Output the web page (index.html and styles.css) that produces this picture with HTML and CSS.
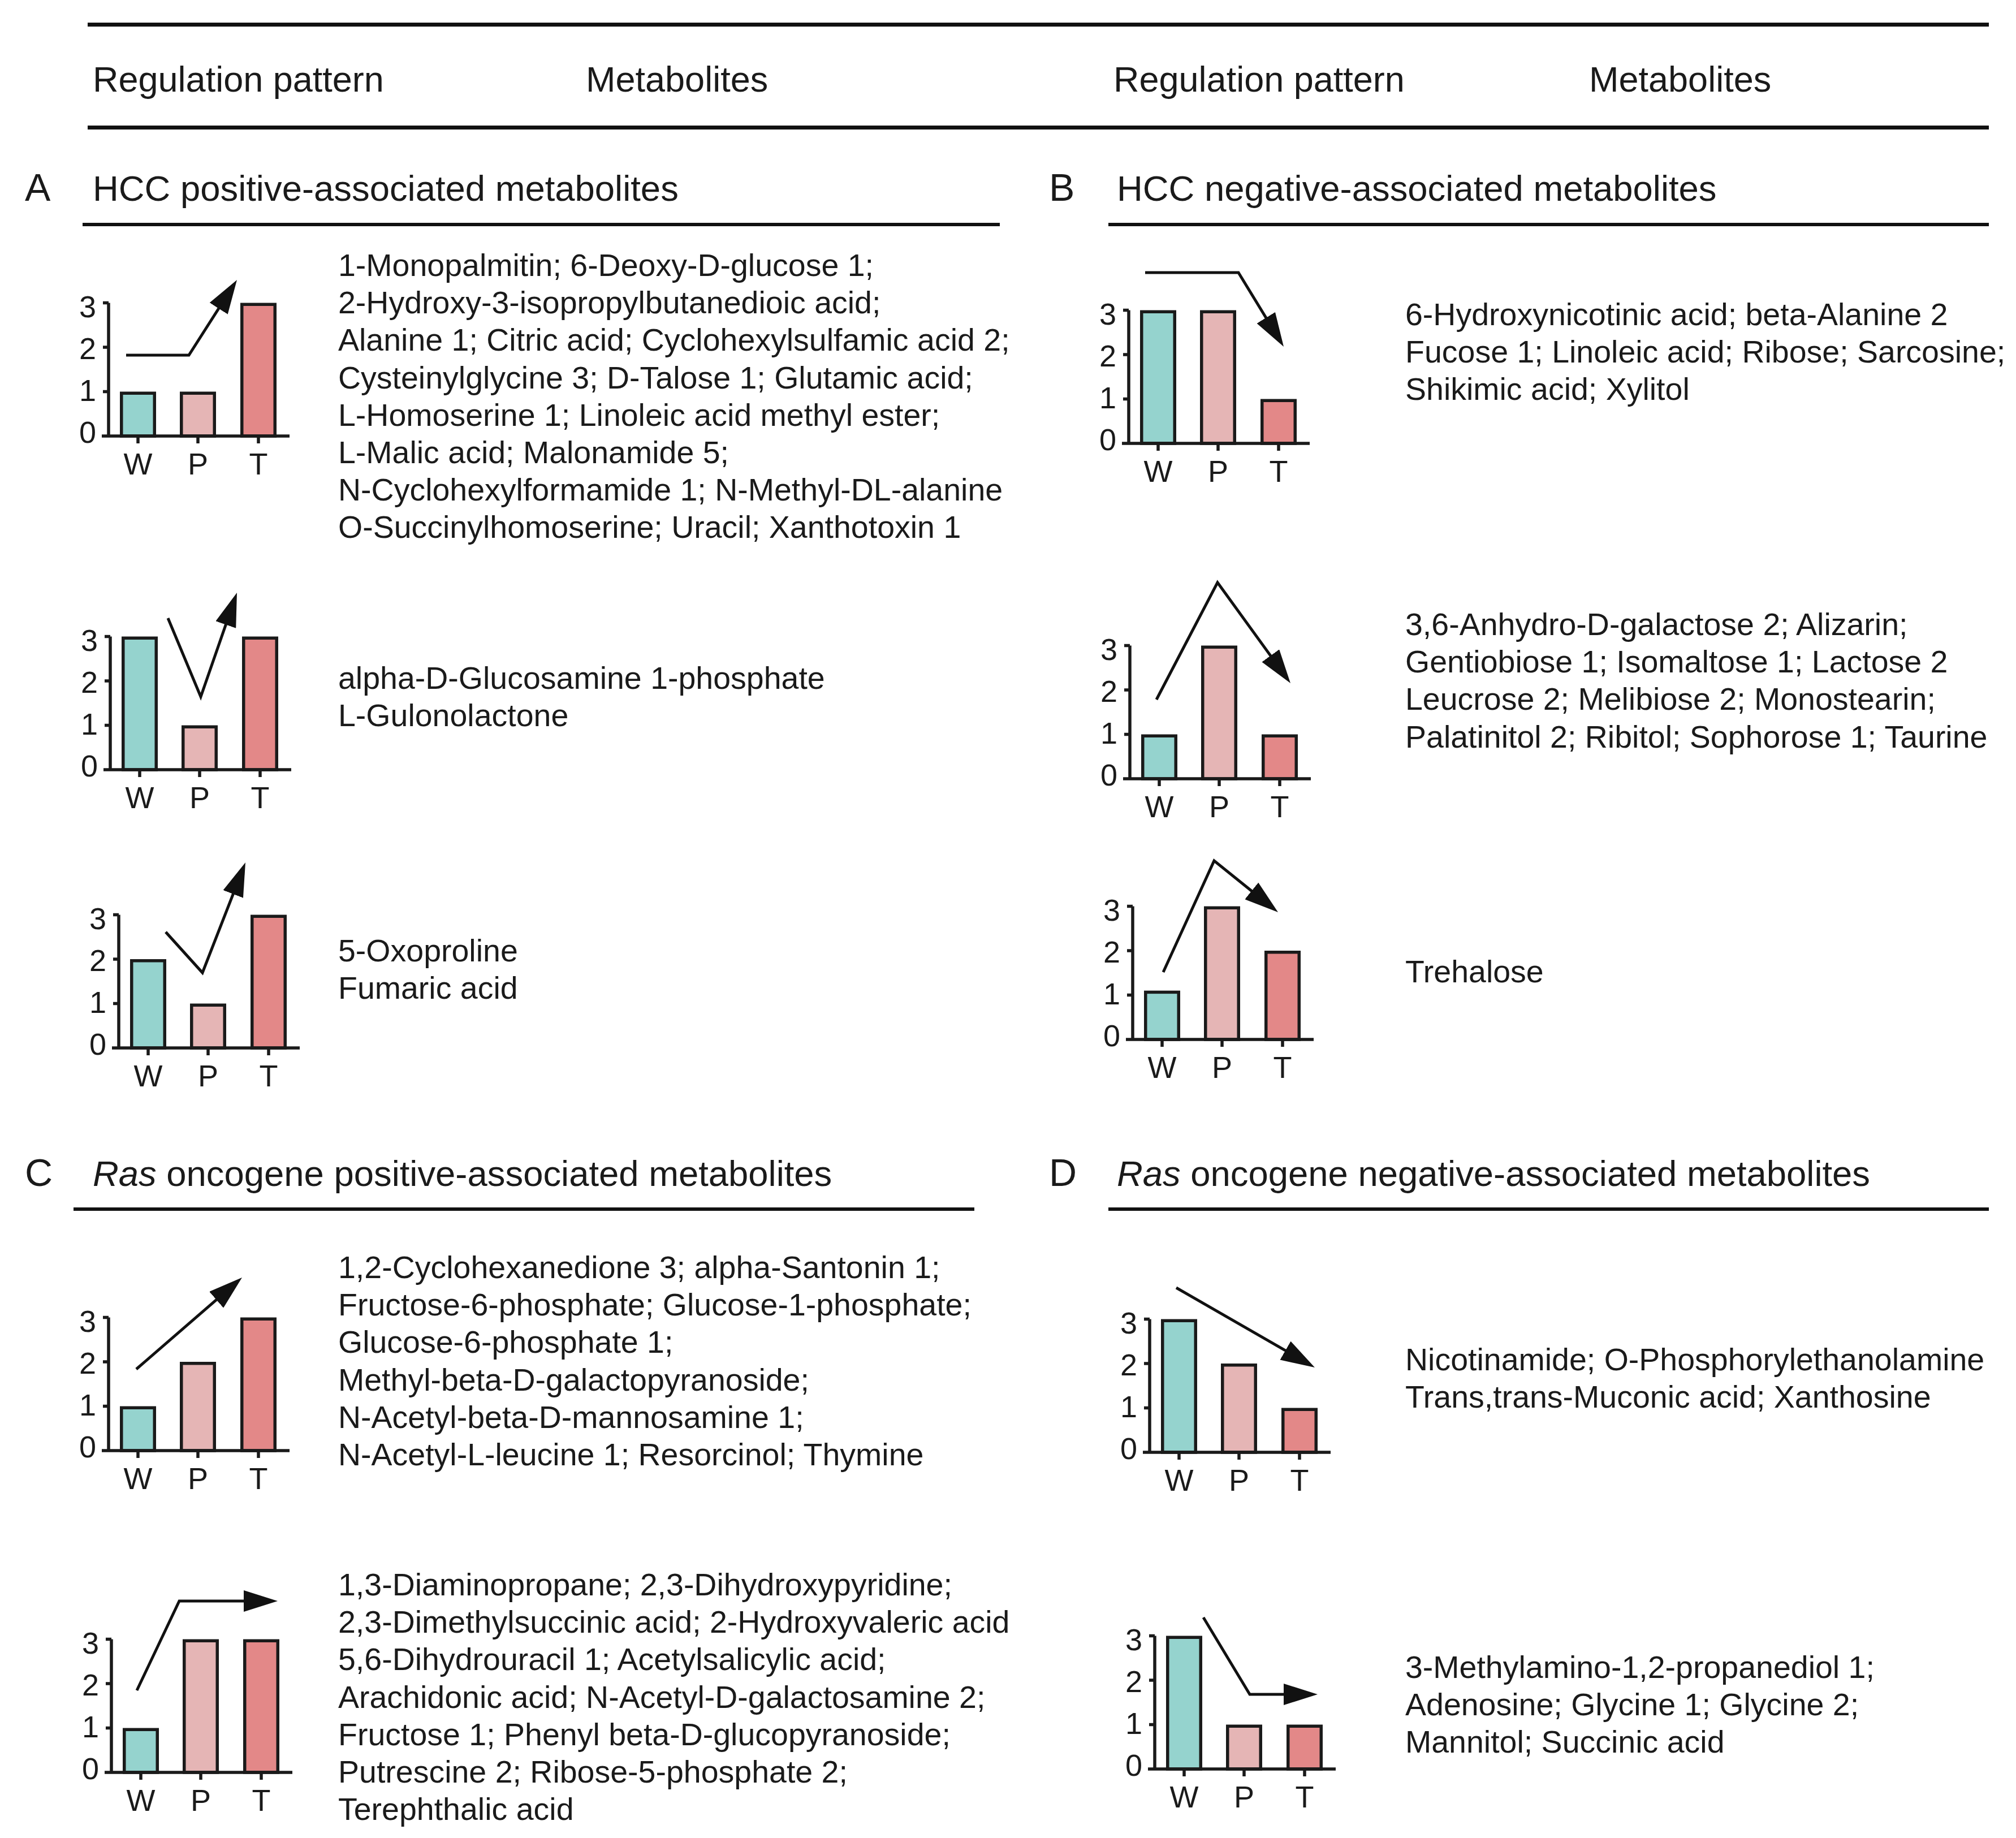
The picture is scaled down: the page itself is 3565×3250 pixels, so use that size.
FILE: index.html
```html
<!DOCTYPE html>
<html lang="en">
<head>
<meta charset="utf-8">
<title>Regulation patterns of metabolites</title>
<link rel="stylesheet" href="styles.css">
</head>
<body>
<div class="page">
  <svg class="defs" width="0" height="0" aria-hidden="true">
    <defs>
      <marker id="ah" viewBox="0 0 60 38" markerWidth="60" markerHeight="38" refX="50" refY="19" orient="auto" markerUnits="userSpaceOnUse">
        <path class="ah-head" d="M0 0L60 19L0 38Z"/>
      </marker>
    </defs>
  </svg>

  <div class="thead">
    <span class="th">Regulation pattern</span>
    <span class="th">Metabolites</span>
    <span class="th">Regulation pattern</span>
    <span class="th">Metabolites</span>
  </div>

  <div class="panels">
    <!-- A -->
    <section class="panel panel-left">
      <div class="sec-head upper"><span class="letter">A</span><span class="title">HCC positive-associated metabolites</span></div>
      <div class="sec-rule rule-a"></div>

      <div class="row r-a1">
        <svg class="chart" width="598" height="560" viewBox="0 0 598 560">
          <g transform="translate(192 371)">
            <rect class="bar bar-w" x="22.75" y="-75.75" width="58.5" height="75.75"/>
            <rect class="bar bar-p" x="128.75" y="-75.75" width="58.5" height="75.75"/>
            <rect class="bar bar-t" x="235.75" y="-232.75" width="58.5" height="232.75"/>
            <path class="axis" d="M0 2.75V-235.5M-10 -235.5H0M-10 -157H0M-10 -78.5H0M-12 0H320M52 0V13M158 0V13M265 0V13"/>
            <text class="ytick" x="-22" y="-210">3</text><text class="ytick" x="-22" y="-136.5">2</text><text class="ytick" x="-22" y="-62.5">1</text><text class="ytick" x="-22" y="11.5">0</text>
            <text class="xlab" x="52" y="68">W</text><text class="xlab" x="158" y="68">P</text><text class="xlab" x="265" y="68">T</text>
            <path class="trend" d="M31 -143H142L221.6 -267.6"/>
          </g>
        </svg>
        <p class="mets">1-Monopalmitin; 6-Deoxy-D-glucose 1;<br>2-Hydroxy-3-isopropylbutanedioic acid;<br>Alanine 1; Citric acid; Cyclohexylsulfamic acid 2;<br>Cysteinylglycine 3; D-Talose 1; Glutamic acid;<br>L-Homoserine 1; Linoleic acid methyl ester;<br>L-Malic acid; Malonamide 5;<br>N-Cyclohexylformamide 1; N-Methyl-DL-alanine<br>O-Succinylhomoserine; Uracil; Xanthotoxin 1</p>
      </div>

      <div class="row r-a2">
        <svg class="chart" width="598" height="520" viewBox="0 0 598 520">
          <g transform="translate(195 401)">
            <rect class="bar bar-w" x="22.75" y="-232.75" width="58.5" height="232.75"/>
            <rect class="bar bar-p" x="128.75" y="-75.75" width="58.5" height="75.75"/>
            <rect class="bar bar-t" x="235.75" y="-232.75" width="58.5" height="232.75"/>
            <path class="axis" d="M0 2.75V-235.5M-10 -235.5H0M-10 -157H0M-10 -78.5H0M-12 0H320M52 0V13M158 0V13M265 0V13"/>
            <text class="ytick" x="-22" y="-210">3</text><text class="ytick" x="-22" y="-136.5">2</text><text class="ytick" x="-22" y="-62.5">1</text><text class="ytick" x="-22" y="11.5">0</text>
            <text class="xlab" x="52" y="68">W</text><text class="xlab" x="158" y="68">P</text><text class="xlab" x="265" y="68">T</text>
            <path class="trend" d="M102 -268L160 -129L220.7 -303.6"/>
          </g>
        </svg>
        <p class="mets">alpha-D-Glucosamine 1-phosphate<br>L-Gulonolactone</p>
      </div>

      <div class="row r-a3">
        <svg class="chart" width="598" height="510" viewBox="0 0 598 510">
          <g transform="translate(210 373)">
            <rect class="bar bar-w" x="22.75" y="-154.25" width="58.5" height="154.25"/>
            <rect class="bar bar-p" x="128.75" y="-75.75" width="58.5" height="75.75"/>
            <rect class="bar bar-t" x="235.75" y="-232.75" width="58.5" height="232.75"/>
            <path class="axis" d="M0 2.75V-235.5M-10 -235.5H0M-10 -157H0M-10 -78.5H0M-12 0H320M52 0V13M158 0V13M265 0V13"/>
            <text class="ytick" x="-22" y="-210">3</text><text class="ytick" x="-22" y="-136.5">2</text><text class="ytick" x="-22" y="-62.5">1</text><text class="ytick" x="-22" y="11.5">0</text>
            <text class="xlab" x="52" y="68">W</text><text class="xlab" x="158" y="68">P</text><text class="xlab" x="265" y="68">T</text>
            <path class="trend" d="M83 -205L148 -133L220.4 -318.7"/>
          </g>
        </svg>
        <p class="mets">5-Oxoproline<br>Fumaric acid</p>
      </div>
    </section>

    <!-- B -->
    <section class="panel panel-right">
      <div class="sec-head upper"><span class="letter">B</span><span class="title">HCC negative-associated metabolites</span></div>
      <div class="sec-rule rule-r"></div>

      <div class="row r-b1">
        <svg class="chart" width="685" height="560" viewBox="0 0 685 560">
          <g transform="translate(196 384)">
            <rect class="bar bar-w" x="22.75" y="-232.75" width="58.5" height="232.75"/>
            <rect class="bar bar-p" x="128.75" y="-232.75" width="58.5" height="232.75"/>
            <rect class="bar bar-t" x="235.75" y="-75.75" width="58.5" height="75.75"/>
            <path class="axis" d="M0 2.75V-235.5M-10 -235.5H0M-10 -157H0M-10 -78.5H0M-12 0H320M52 0V13M158 0V13M265 0V13"/>
            <text class="ytick" x="-22" y="-210">3</text><text class="ytick" x="-22" y="-136.5">2</text><text class="ytick" x="-22" y="-62.5">1</text><text class="ytick" x="-22" y="11.5">0</text>
            <text class="xlab" x="52" y="68">W</text><text class="xlab" x="158" y="68">P</text><text class="xlab" x="265" y="68">T</text>
            <path class="trend" d="M29 -302H194L268.8 -179.5"/>
          </g>
        </svg>
        <p class="mets">6-Hydroxynicotinic acid; beta-Alanine 2<br>Fucose 1; Linoleic acid; Ribose; Sarcosine;<br>Shikimic acid; Xylitol</p>
      </div>

      <div class="row r-b2">
        <svg class="chart" width="685" height="520" viewBox="0 0 685 520">
          <g transform="translate(198 417)">
            <rect class="bar bar-w" x="22.75" y="-75.75" width="58.5" height="75.75"/>
            <rect class="bar bar-p" x="128.75" y="-232.75" width="58.5" height="232.75"/>
            <rect class="bar bar-t" x="235.75" y="-75.75" width="58.5" height="75.75"/>
            <path class="axis" d="M0 2.75V-235.5M-10 -235.5H0M-10 -157H0M-10 -78.5H0M-12 0H320M52 0V13M158 0V13M265 0V13"/>
            <text class="ytick" x="-22" y="-210">3</text><text class="ytick" x="-22" y="-136.5">2</text><text class="ytick" x="-22" y="-62.5">1</text><text class="ytick" x="-22" y="11.5">0</text>
            <text class="xlab" x="52" y="68">W</text><text class="xlab" x="158" y="68">P</text><text class="xlab" x="265" y="68">T</text>
            <path class="trend" d="M47 -140L155 -347L278.1 -177.1"/>
          </g>
        </svg>
        <p class="mets">3,6-Anhydro-D-galactose 2; Alizarin;<br>Gentiobiose 1; Isomaltose 1; Lactose 2<br>Leucrose 2; Melibiose 2; Monostearin;<br>Palatinitol 2; Ribitol; Sophorose 1; Taurine</p>
      </div>

      <div class="row r-b3">
        <svg class="chart" width="685" height="510" viewBox="0 0 685 510">
          <g transform="translate(203 358)">
            <rect class="bar bar-w" x="22.75" y="-83.6" width="58.5" height="83.6"/>
            <rect class="bar bar-p" x="128.75" y="-232.75" width="58.5" height="232.75"/>
            <rect class="bar bar-t" x="235.75" y="-154.25" width="58.5" height="154.25"/>
            <path class="axis" d="M0 2.75V-235.5M-10 -235.5H0M-10 -157H0M-10 -78.5H0M-12 0H320M52 0V13M158 0V13M265 0V13"/>
            <text class="ytick" x="-22" y="-210">3</text><text class="ytick" x="-22" y="-136.5">2</text><text class="ytick" x="-22" y="-62.5">1</text><text class="ytick" x="-22" y="11.5">0</text>
            <text class="xlab" x="52" y="68">W</text><text class="xlab" x="158" y="68">P</text><text class="xlab" x="265" y="68">T</text>
            <path class="trend" d="M54 -119L144 -316L249.2 -231.3"/>
          </g>
        </svg>
        <p class="mets">Trehalose</p>
      </div>
    </section>

    <!-- C -->
    <section class="panel panel-left">
      <div class="sec-head lower"><span class="letter">C</span><span class="title"><em class="gene">Ras</em> oncogene positive-associated metabolites</span></div>
      <div class="sec-rule rule-c"></div>

      <div class="row r-c1">
        <svg class="chart" width="598" height="559" viewBox="0 0 598 559">
          <g transform="translate(192 424)">
            <rect class="bar bar-w" x="22.75" y="-75.75" width="58.5" height="75.75"/>
            <rect class="bar bar-p" x="128.75" y="-154.25" width="58.5" height="154.25"/>
            <rect class="bar bar-t" x="235.75" y="-232.75" width="58.5" height="232.75"/>
            <path class="axis" d="M0 2.75V-235.5M-10 -235.5H0M-10 -157H0M-10 -78.5H0M-12 0H320M52 0V13M158 0V13M265 0V13"/>
            <text class="ytick" x="-22" y="-210">3</text><text class="ytick" x="-22" y="-136.5">2</text><text class="ytick" x="-22" y="-62.5">1</text><text class="ytick" x="-22" y="11.5">0</text>
            <text class="xlab" x="52" y="68">W</text><text class="xlab" x="158" y="68">P</text><text class="xlab" x="265" y="68">T</text>
            <path class="trend" d="M49 -144L228.4 -299.4"/>
          </g>
        </svg>
        <p class="mets">1,2-Cyclohexanedione 3; alpha-Santonin 1;<br>Fructose-6-phosphate; Glucose-1-phosphate;<br>Glucose-6-phosphate 1;<br>Methyl-beta-D-galactopyranoside;<br>N-Acetyl-beta-D-mannosamine 1;<br>N-Acetyl-L-leucine 1; Resorcinol; Thymine</p>
      </div>

      <div class="row r-c2">
        <svg class="chart" width="598" height="550" viewBox="0 0 598 550">
          <g transform="translate(197 434)">
            <rect class="bar bar-w" x="22.75" y="-75.75" width="58.5" height="75.75"/>
            <rect class="bar bar-p" x="128.75" y="-232.75" width="58.5" height="232.75"/>
            <rect class="bar bar-t" x="235.75" y="-232.75" width="58.5" height="232.75"/>
            <path class="axis" d="M0 2.75V-235.5M-10 -235.5H0M-10 -157H0M-10 -78.5H0M-12 0H320M52 0V13M158 0V13M265 0V13"/>
            <text class="ytick" x="-22" y="-210">3</text><text class="ytick" x="-22" y="-136.5">2</text><text class="ytick" x="-22" y="-62.5">1</text><text class="ytick" x="-22" y="11.5">0</text>
            <text class="xlab" x="52" y="68">W</text><text class="xlab" x="158" y="68">P</text><text class="xlab" x="265" y="68">T</text>
            <path class="trend" d="M45 -145L120 -303H284"/>
          </g>
        </svg>
        <p class="mets">1,3-Diaminopropane; 2,3-Dihydroxypyridine;<br>2,3-Dimethylsuccinic acid; 2-Hydroxyvaleric acid<br>5,6-Dihydrouracil 1; Acetylsalicylic acid;<br>Arachidonic acid; N-Acetyl-D-galactosamine 2;<br>Fructose 1; Phenyl beta-D-glucopyranoside;<br>Putrescine 2; Ribose-5-phosphate 2;<br>Terephthalic acid</p>
      </div>
    </section>

    <!-- D -->
    <section class="panel panel-right">
      <div class="sec-head lower"><span class="letter">D</span><span class="title"><em class="gene">Ras</em> oncogene negative-associated metabolites</span></div>
      <div class="sec-rule rule-r"></div>

      <div class="row r-d1">
        <svg class="chart" width="685" height="559" viewBox="0 0 685 559">
          <g transform="translate(233 427)">
            <rect class="bar bar-w" x="22.75" y="-232.75" width="58.5" height="232.75"/>
            <rect class="bar bar-p" x="128.75" y="-154.25" width="58.5" height="154.25"/>
            <rect class="bar bar-t" x="235.75" y="-75.75" width="58.5" height="75.75"/>
            <path class="axis" d="M0 2.75V-235.5M-10 -235.5H0M-10 -157H0M-10 -78.5H0M-12 0H320M52 0V13M158 0V13M265 0V13"/>
            <text class="ytick" x="-22" y="-210">3</text><text class="ytick" x="-22" y="-136.5">2</text><text class="ytick" x="-22" y="-62.5">1</text><text class="ytick" x="-22" y="11.5">0</text>
            <text class="xlab" x="52" y="68">W</text><text class="xlab" x="158" y="68">P</text><text class="xlab" x="265" y="68">T</text>
            <path class="trend" d="M47 -291L283.3 -155"/>
          </g>
        </svg>
        <p class="mets">Nicotinamide; O-Phosphorylethanolamine<br>Trans,trans-Muconic acid; Xanthosine</p>
      </div>

      <div class="row r-d2">
        <svg class="chart" width="685" height="550" viewBox="0 0 685 550">
          <g transform="translate(242 428)">
            <rect class="bar bar-w" x="22.75" y="-232.75" width="58.5" height="232.75"/>
            <rect class="bar bar-p" x="128.75" y="-75.75" width="58.5" height="75.75"/>
            <rect class="bar bar-t" x="235.75" y="-75.75" width="58.5" height="75.75"/>
            <path class="axis" d="M0 2.75V-235.5M-10 -235.5H0M-10 -157H0M-10 -78.5H0M-12 0H320M52 0V13M158 0V13M265 0V13"/>
            <text class="ytick" x="-22" y="-210">3</text><text class="ytick" x="-22" y="-136.5">2</text><text class="ytick" x="-22" y="-62.5">1</text><text class="ytick" x="-22" y="11.5">0</text>
            <text class="xlab" x="52" y="68">W</text><text class="xlab" x="158" y="68">P</text><text class="xlab" x="265" y="68">T</text>
            <path class="trend" d="M86 -268L168 -132H278"/>
          </g>
        </svg>
        <p class="mets">3-Methylamino-1,2-propanediol 1;<br>Adenosine; Glycine 1; Glycine 2;<br>Mannitol; Succinic acid</p>
      </div>
    </section>
  </div>
</div>
</body>
</html>
```

FILE: styles.css
```css
html, body {
  margin: 0;
  padding: 0;
  background: #ffffff;
}

body {
  font-family: "Liberation Sans", Arial, sans-serif;
  color: #1a1a1a;
}

.page {
  width: 3565px;
  height: 3250px;
  overflow: hidden;
}

.defs {
  display: block;
  width: 0;
  height: 0;
}

.ah-head {
  fill: #111111;
}

/* table header */
.thead {
  box-sizing: border-box;
  margin: 40px 0 0 155px;
  width: 3362px;
  height: 189px;
  padding: 62px 0 51px 9px;
  border-top: 7px solid #111111;
  border-bottom: 7px solid #111111;
  display: grid;
  grid-template-columns: 872px 933px 841px 1fr;
  font-size: 63px;
  line-height: 62px;
  white-space: nowrap;
}

/* panels */
.panels {
  display: grid;
  grid-template-columns: 1800px 1765px;
}

.sec-head {
  box-sizing: border-box;
  display: flex;
  align-items: baseline;
  white-space: nowrap;
}

.sec-head.upper {
  height: 165px;
  padding-top: 71px;
}

.sec-head.lower {
  height: 145px;
  padding-top: 52px;
}

.panel-left .sec-head {
  padding-left: 44px;
}

.panel-right .sec-head {
  padding-left: 55px;
}

.letter {
  flex: none;
  width: 120px;
  font-size: 68px;
  line-height: 62px;
}

.title {
  font-size: 63.4px;
  line-height: 62px;
}

.gene {
  font-style: italic;
}

.sec-rule {
  height: 6px;
  background: #111111;
}

.rule-a {
  margin-left: 146px;
  width: 1622px;
}

.rule-c {
  margin-left: 130px;
  width: 1593px;
}

.rule-r {
  margin-left: 160px;
  width: 1557px;
}

/* rows: chart + metabolite list */
.row {
  display: grid;
  align-items: start;
}

.panel-left .row {
  grid-template-columns: 598px 1fr;
}

.panel-right .row {
  grid-template-columns: 685px 1fr;
}

.chart {
  display: block;
}

.mets {
  margin: 0;
  font-size: 55.5px;
  line-height: 66.2px;
  white-space: nowrap;
}

.r-a1 { height: 560px; }
.r-a2 { height: 520px; }
.r-a3 { height: 510px; }
.r-b1 { height: 560px; }
.r-b2 { height: 520px; }
.r-b3 { height: 510px; }
.r-c1 { height: 559px; }
.r-c2 { height: 550px; }
.r-d1 { height: 559px; }
.r-d2 { height: 550px; }

.r-a1 .mets { padding-top: 36px; }
.r-a2 .mets { padding-top: 206px; }
.r-a3 .mets { padding-top: 168px; }
.r-b1 .mets { padding-top: 123px; }
.r-b2 .mets { padding-top: 111px; }
.r-b3 .mets { padding-top: 205px; }
.r-c1 .mets { padding-top: 67px; }
.r-c2 .mets { padding-top: 69px; }
.r-d1 .mets { padding-top: 230px; }
.r-d2 .mets { padding-top: 215px; }

/* chart pieces */
.chart text {
  font-family: "Liberation Sans", Arial, sans-serif;
  font-size: 54px;
  fill: #1a1a1a;
}

.ytick {
  text-anchor: end;
}

.xlab {
  text-anchor: middle;
}

.axis {
  fill: none;
  stroke: #1a1a1a;
  stroke-width: 5.5;
}

.bar {
  stroke: #1a1a1a;
  stroke-width: 5.5;
}

.bar-w { fill: #95d3ce; }
.bar-p { fill: #e5b5b5; }
.bar-t { fill: #e38888; }

.trend {
  fill: none;
  stroke: #111111;
  stroke-width: 5;
  stroke-linejoin: miter;
  marker-end: url(#ah);
}
```
